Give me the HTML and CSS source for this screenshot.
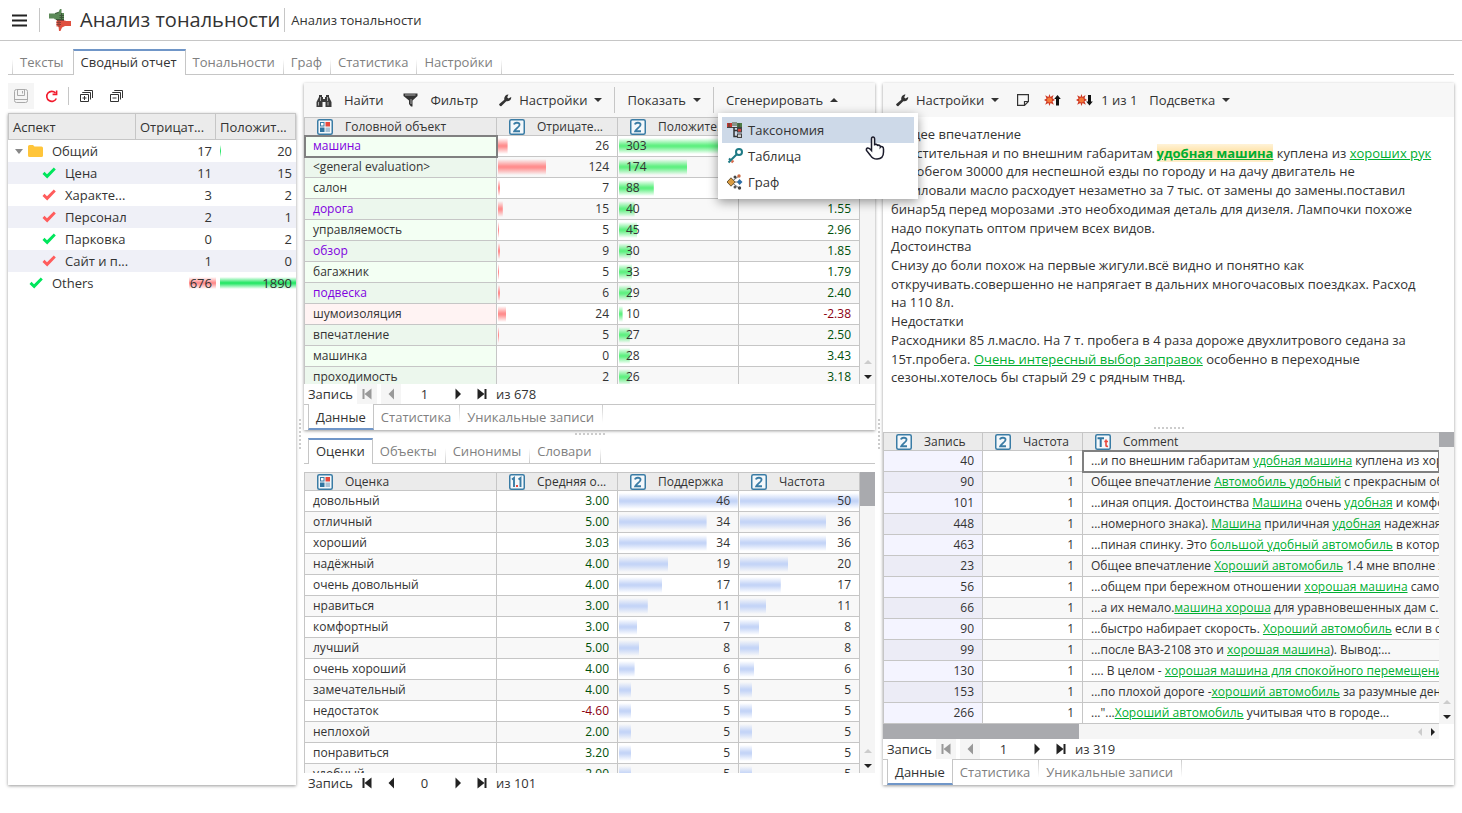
FILE: index.html
```html
<!DOCTYPE html>
<html lang="ru">
<head>
<meta charset="utf-8">
<title>Анализ тональности</title>
<link rel="stylesheet" href="styles.css">
</head>
<body>
<svg class="sprite" aria-hidden="true">
  <symbol id="i-cat" viewBox="0 0 16 16"><rect x=".75" y=".75" width="14.5" height="14.5" rx="1.5" fill="#f4f8fb" stroke="#3a7ca5" stroke-width="1.5"/><rect x="3.5" y="3.5" width="3.5" height="3.5" fill="#fff" stroke="#3a7ca5"/><rect x="8.5" y="3" width="4.5" height="4.5" fill="#e8483c"/><rect x="3" y="8.500" width="4.500" height="4.500" fill="#2f74a0"/><rect x="8.500" y="8.500" width="4.500" height="4.500" fill="#a9c3d6"/></symbol>
  <symbol id="i-num" viewBox="0 0 16 16"><rect x=".75" y=".75" width="14.5" height="14.5" rx="1.5" fill="#f4f8fb" stroke="#3a7ca5" stroke-width="1.5"/><path d="M5 5.500C5.500 3 10.800 3 10.500 6 10.300 8 6.500 9.500 5.300 12.200H11" fill="none" stroke="#3a7ca5" stroke-width="1.900"/></symbol>
  <symbol id="i-real" viewBox="0 0 16 16"><rect x=".75" y=".75" width="14.5" height="14.5" rx="1.5" fill="#f4f8fb" stroke="#3a7ca5" stroke-width="1.5"/><path d="M3 5.500 5 4V13M9.500 5.500 11.500 4V13" fill="none" stroke="#3a7ca5" stroke-width="1.900"/><rect x="7" y="11" width="2" height="2" fill="#e8483c"/></symbol>
  <symbol id="i-text" viewBox="0 0 16 16"><rect x=".75" y=".75" width="14.5" height="14.5" rx="1.5" fill="#f4f8fb" stroke="#3a7ca5" stroke-width="1.5"/><path d="M2.500 4.200H9M5.700 4V13" fill="none" stroke="#2f74a0" stroke-width="2"/><path d="M11 5.500V11.500Q11 12.700 13 12.300M9.300 7.500H13" fill="none" stroke="#e8483c" stroke-width="1.600"/></symbol>
  <symbol id="i-wrench" viewBox="0 0 14 14"><path d="M1 11.200 6.300 6.800C5.800 4 7.500 1.500 10.500 1.500L9.200 4.200 10.300 5.400 13.200 4C13.500 7 10.800 8.700 8.300 8.300L3.200 13.200Q1.800 13.600 1 11.200Z" fill="#333"/></symbol>
  <symbol id="i-first" viewBox="0 0 12 12"><path d="M2.500 1V11" stroke="currentColor" stroke-width="2"/><path d="M10.500 .5V11.500L3.500 6Z" fill="currentColor"/></symbol>
  <symbol id="i-prev" viewBox="0 0 12 12"><path d="M9 .5V11.500L3.500 6Z" fill="currentColor"/></symbol>
  <symbol id="i-next" viewBox="0 0 12 12"><path d="M3.500 .5V11.500L9 6Z" fill="currentColor"/></symbol>
  <symbol id="i-last" viewBox="0 0 12 12"><path d="M9.500 1V11" stroke="currentColor" stroke-width="2"/><path d="M1.500 .5V11.500L8.500 6Z" fill="currentColor"/></symbol>
  <symbol id="i-check" viewBox="0 0 14 12"><path d="M.5 7 2.500 4.800 5 7.300 11.800 .5 13.800 2.400 5.200 11.500Z" fill="currentColor"/></symbol>
  <symbol id="i-burst" viewBox="0 0 11 12"><path d="M5.500 0 6.500 3 9.500 1 8.500 4.200 11 6 8.500 7.200 9.800 10.800 6.600 9 5.500 12 4.400 9 1.200 10.800 2.500 7.500 0 6 2.500 4.400 1.200 1.200 4.400 3Z" fill="#cf3a24"/><circle cx="5.500" cy="6" r="2.500" fill="#f5793a"/></symbol>
</svg>

<header class="top">
  <button class="burger" aria-label="Меню"><svg width="15" height="13" viewBox="0 0 15 13"><path d="M0 1.500H15M0 6.500H15M0 11.500H15" stroke="#222" stroke-width="2.200"/></svg></button>
  <span class="vsep"></span>
  <svg class="logo" width="22" height="22" viewBox="0 0 22 22"><path d="M0 4.500H6L9.500 3 11 0H12.500V4H15V10.500H6L5 9.500H0Z" fill="#5c8a58"/><path d="M6 4.500 9.500 3.500M12.500 4V10M10.500 6.500H15M10.500 8.500H15M7 10.500H15" stroke="#3c5638"/><path d="M22 12H17L16 11.500H7.500V17.500H9.500L10 22H11.500L13 18.500 16 17H22Z" fill="#e0503f"/><path d="M7.500 13.500H12M7.500 15.500H12M10 12V18M8 11.500H15" stroke="#8a4038"/></svg>
  <h1>Анализ тональности</h1>
  <span class="vsep"></span>
  <span class="crumb">Анализ тональности</span>
</header>

<nav class="tabs tabs-top main-tabs">
  <button>Тексты</button><button class="on">Сводный отчет</button><button>Тональности</button><button>Граф</button><button>Статистика</button><button>Настройки</button>
</nav>

<main>
  <section class="aspects">
    <div class="icons">
      <button class="off" aria-label="Сохранить"><svg width="14" height="14" viewBox="0 0 14 14" fill="none" stroke="#aaa"><rect x=".5" y=".5" width="13" height="13" rx="2"/><path d="M3.500.5V6.500H10.500V.5M8.500 2V4.500M1 10.500H13"/></svg></button>
      <button aria-label="Обновить"><svg width="13" height="13" viewBox="0 0 13 13" fill="none" stroke="#f21a2c" stroke-width="1.600"><path d="M10.500 3A5 5 0 1 0 11.300 8.500"/><path d="M11.600.5V4.400H7.600"/></svg></button>
      <span class="vsep"></span>
      <button aria-label="Развернуть все"><svg width="13" height="12" viewBox="0 0 13 12" fill="none" stroke="#333"><path d="M2.500 3V2.500H10.500V9.500M4.500 1V.5H12.500V8M.5 4.500H8.500V11.500H.5ZM2.500 8H6.500M4.500 6V10"/></svg></button>
      <button aria-label="Свернуть все"><svg width="13" height="12" viewBox="0 0 13 12" fill="none" stroke="#333"><path d="M2.500 3V2.500H10.500V9.500M4.500 1V.5H12.500V8M.5 4.500H8.500V11.500H.5ZM2.500 8H6.500"/></svg></button>
    </div>
    <div class="panel tree-panel">
    <table class="tree">
      <colgroup><col><col class="w80"><col class="w80"></colgroup>
      <thead><tr><th>Аспект</th><th>Отрицат...</th><th>Положит...</th></tr></thead>
      <tbody>
        <tr><td><div class="node"><svg width="8" height="5" viewBox="0 0 8 5"><path d="M0 0H8L4 5Z" fill="#888"/></svg><svg class="folder" width="15" height="12" viewBox="0 0 15 12"><path d="M0 1.500Q0 0 1.500 0H5L6.500 1.500H13.500Q15 1.500 15 3V10.500Q15 12 13.500 12H1.500Q0 12 0 10.500Z" fill="#ffc53a"/></svg>Общий</div></td><td>17</td><td class="pos" style="--bar:1px">20</td></tr>
        <tr><td><div class="node leaf"><svg class="ok" width="14" height="12"><use href="#i-check"/></svg>Цена</div></td><td>11</td><td>15</td></tr>
        <tr><td><div class="node leaf"><svg class="bad" width="14" height="12"><use href="#i-check"/></svg>Характе...</div></td><td>3</td><td>2</td></tr>
        <tr><td><div class="node leaf"><svg class="bad" width="14" height="12"><use href="#i-check"/></svg>Персонал</div></td><td>2</td><td>1</td></tr>
        <tr><td><div class="node leaf"><svg class="ok" width="14" height="12"><use href="#i-check"/></svg>Парковка</div></td><td>0</td><td>2</td></tr>
        <tr><td><div class="node leaf"><svg class="bad" width="14" height="12"><use href="#i-check"/></svg>Сайт и п...</div></td><td>1</td><td>0</td></tr>
        <tr><td><div class="node root"><svg class="ok" width="14" height="12"><use href="#i-check"/></svg>Others</div></td><td class="neg" style="--bar:34%">676</td><td class="pos" style="--bar:100%">1890</td></tr>
      </tbody>
    </table>
    </div>
  </section>

  <div class="split-v"></div>

  <div class="middle">
    <section class="panel">
      <div class="toolbar">
        <button class="wide"><svg width="16" height="15" viewBox="0 0 16 15"><path d="M3 2H6V4H7V6H9V4H10V2H13V4L15.500 9V14H9.500V9H6.500V14H.5V9L3 4Z" fill="#3a3a3a"/><path d="M2.500 9V12.500M4.500 4V8M11.500 4V8M12 9V12.500" stroke="#aaa"/></svg>Найти</button>
        <button class="wide"><svg width="15" height="14" viewBox="0 0 15 14"><path d="M.5.500H14.500V3L9.500 7.500V13.500H8L6 11V7.500L.5 3Z" fill="#333"/><path d="M2 2H12.500M8 6V11" stroke="#aaa"/></svg>Фильтр</button>
        <button><svg width="14" height="14"><use href="#i-wrench"/></svg>Настройки<i class="caret"></i></button>
        <span class="vsep"></span>
        <button>Показать<i class="caret"></i></button>
        <span class="vsep"></span>
        <div class="drop">
          <button>Сгенерировать<i class="caret up"></i></button>
          <div class="menu">
            <button class="hot"><svg width="16" height="16" viewBox="0 0 16 16"><path d="M0 1H5V5H0Z" fill="#c9352c"/><path d="M5 0H10V4H5Z" fill="#8b938b"/><path d="M10 1H15V5H10Z" fill="#4b7a45"/><path d="M0 5.500H15M2 1V5M12 1V5" stroke="#444"/><path d="M7 5V14.500H11M7 8.500H11" fill="none" stroke="#333" stroke-width="1.500"/><rect x="10.500" y="6.500" width="4" height="3.500" fill="#d8403a" stroke="#444"/><rect x="10.500" y="12" width="4" height="3.500" fill="#ccc" stroke="#444"/></svg>Таксономия</button>
            <button><svg width="16" height="16" viewBox="0 0 16 16" fill="none" stroke="#1f7a85" stroke-width="2"><circle cx="12" cy="4" r="3"/><path d="M9.800 6.200 1.500 14.500M3.500 12 2 10.500"/><path d="M4.500 14.500 6.500 12.500" stroke="#d4694c"/></svg>Таблица</button>
            <button><svg width="16" height="16" viewBox="0 0 16 16"><path d="M4 8 12 2M4 8H13M4 8 12 14" stroke="#777"/><path d="M4 3.800 8.200 8 4 12.200 0 8Z" fill="#d99b41" stroke="#6b5632"/><circle cx="8" cy="3" r="1.500" fill="#444"/><circle cx="12" cy="2" r="1.700" fill="#c96a42"/><path d="M12.500 5 15.500 8 12.500 11 10 8Z" fill="#2c6ea6"/><circle cx="8" cy="13" r="1.500" fill="#555"/><circle cx="12.500" cy="14" r="1.700" fill="#444"/></svg>Граф</button>
            <svg class="hand" width="20" height="24" viewBox="0 0 20 24"><path d="M6.500 14.500V3Q6.500 1 8 1T9.600 3V9.500Q9.800 8 11.200 8.200 12.600 8.500 12.500 10 13 8.800 14.300 9.200 15.500 9.700 15.400 11 16 10.200 17.300 10.700 18.500 11.200 18.500 13V16Q18.500 23 12 23 7.500 23 5.500 19.500L1.500 14.500Q1 12.500 2.500 12T6.500 14.500Z" fill="#fff" stroke="#1b1b2b" stroke-width="1.500"/></svg>
          </div>
        </div>
      </div>
      <div class="grid">
        <div class="clip">
          <table class="data objects">
            <colgroup><col><col class="w121"><col class="w121"><col class="w121"></colgroup>
            <thead><tr><th><div><svg width="16" height="16"><use href="#i-cat"/></svg>Головной объект</div></th><th><div><svg width="16" height="16"><use href="#i-num"/></svg>Отрицате...</div></th><th><div><svg width="16" height="16"><use href="#i-num"/></svg>Положите...</div></th><th><div><svg width="16" height="16"><use href="#i-real"/></svg>Средняя о...</div></th></tr></thead>
            <tbody>
              <tr><td class="vis focus">машина</td><td class="neg" style="--bar:8%">26</td><td class="pos" style="--bar:99%">303</td><td class="up">2.62</td></tr>
              <tr><td>&lt;general evaluation&gt;</td><td class="neg" style="--bar:40%">124</td><td class="pos" style="--bar:57%">174</td><td class="up">1.20</td></tr>
              <tr><td>салон</td><td class="neg" style="--bar:2%">7</td><td class="pos" style="--bar:29%">88</td><td class="up">2.94</td></tr>
              <tr><td class="vis">дорога</td><td class="neg" style="--bar:4%">15</td><td class="pos" style="--bar:13%">40</td><td class="up">1.55</td></tr>
              <tr><td>управляемость</td><td class="neg" style="--bar:1%">5</td><td class="pos" style="--bar:15%">45</td><td class="up">2.96</td></tr>
              <tr><td class="vis">обзор</td><td class="neg" style="--bar:2%">9</td><td class="pos" style="--bar:10%">30</td><td class="up">1.85</td></tr>
              <tr><td>багажник</td><td class="neg" style="--bar:1%">5</td><td class="pos" style="--bar:11%">33</td><td class="up">1.79</td></tr>
              <tr><td class="vis">подвеска</td><td class="neg" style="--bar:2%">6</td><td class="pos" style="--bar:10%">29</td><td class="up">2.40</td></tr>
              <tr class="minus"><td>шумоизоляция</td><td class="neg" style="--bar:7%">24</td><td class="pos" style="--bar:3%">10</td><td class="down">-2.38</td></tr>
              <tr><td>впечатление</td><td class="neg" style="--bar:1%">5</td><td class="pos" style="--bar:9%">27</td><td class="up">2.50</td></tr>
              <tr><td>машинка</td><td>0</td><td class="pos" style="--bar:9%">28</td><td class="up">3.43</td></tr>
              <tr><td>проходимость</td><td>2</td><td class="pos" style="--bar:9%">26</td><td class="up">3.18</td></tr>
            </tbody>
          </table>
        </div>
        <div class="vscroll"><i class="arr-up"></i><i class="arr-down"></i></div>
      </div>
      <div class="pager"><label for="p1">Запись</label><button disabled aria-label="Первая"><svg width="12" height="12"><use href="#i-first"/></svg></button><button disabled aria-label="Назад"><svg width="12" height="12"><use href="#i-prev"/></svg></button><input id="p1" value="1"><button aria-label="Вперёд"><svg width="12" height="12"><use href="#i-next"/></svg></button><button aria-label="Последняя"><svg width="12" height="12"><use href="#i-last"/></svg></button><span>из 678</span></div>
      <nav class="tabs tabs-bottom"><button class="on">Данные</button><button>Статистика</button><button>Уникальные записи</button></nav>
    </section>

    <div class="split-h"></div>

    <section class="lower">
      <nav class="tabs tabs-top"><button class="on">Оценки</button><button>Объекты</button><button>Синонимы</button><button>Словари</button></nav>
      <div class="grid">
        <div class="clip">
          <table class="data">
            <colgroup><col><col class="w121"><col class="w121"><col class="w121"></colgroup>
            <thead><tr><th><div><svg width="16" height="16"><use href="#i-cat"/></svg>Оценка</div></th><th><div><svg width="16" height="16"><use href="#i-real"/></svg>Средняя о...</div></th><th><div><svg width="16" height="16"><use href="#i-num"/></svg>Поддержка</div></th><th><div><svg width="16" height="16"><use href="#i-num"/></svg>Частота</div></th></tr></thead>
            <tbody>
              <tr><td>довольный</td><td class="up">3.00</td><td class="cnt" style="--bar:99%">46</td><td class="cnt" style="--bar:99%">50</td></tr>
              <tr><td>отличный</td><td class="up">5.00</td><td class="cnt" style="--bar:73%">34</td><td class="cnt" style="--bar:72%">36</td></tr>
              <tr><td>хороший</td><td class="up">3.03</td><td class="cnt" style="--bar:73%">34</td><td class="cnt" style="--bar:72%">36</td></tr>
              <tr><td>надёжный</td><td class="up">4.00</td><td class="cnt" style="--bar:41%">19</td><td class="cnt" style="--bar:40%">20</td></tr>
              <tr><td>очень довольный</td><td class="up">4.00</td><td class="cnt" style="--bar:36%">17</td><td class="cnt" style="--bar:34%">17</td></tr>
              <tr><td>нравиться</td><td class="up">3.00</td><td class="cnt" style="--bar:24%">11</td><td class="cnt" style="--bar:22%">11</td></tr>
              <tr><td>комфортный</td><td class="up">3.00</td><td class="cnt" style="--bar:15%">7</td><td class="cnt" style="--bar:16%">8</td></tr>
              <tr><td>лучший</td><td class="up">5.00</td><td class="cnt" style="--bar:17%">8</td><td class="cnt" style="--bar:16%">8</td></tr>
              <tr><td>очень хороший</td><td class="up">4.00</td><td class="cnt" style="--bar:13%">6</td><td class="cnt" style="--bar:12%">6</td></tr>
              <tr><td>замечательный</td><td class="up">4.00</td><td class="cnt" style="--bar:10%">5</td><td class="cnt" style="--bar:10%">5</td></tr>
              <tr><td>недостаток</td><td class="down">-4.60</td><td class="cnt" style="--bar:10%">5</td><td class="cnt" style="--bar:10%">5</td></tr>
              <tr><td>неплохой</td><td class="up">2.00</td><td class="cnt" style="--bar:10%">5</td><td class="cnt" style="--bar:10%">5</td></tr>
              <tr><td>понравиться</td><td class="up">3.20</td><td class="cnt" style="--bar:10%">5</td><td class="cnt" style="--bar:10%">5</td></tr>
              <tr><td>удобный</td><td class="up">2.00</td><td class="cnt" style="--bar:10%">5</td><td class="cnt" style="--bar:10%">5</td></tr>
            </tbody>
          </table>
        </div>
        <div class="vscroll"><i class="thumb tall"></i><i class="arr-up"></i><i class="arr-down"></i></div>
      </div>
      <div class="pager"><label for="p2">Запись</label><button aria-label="Первая"><svg width="12" height="12"><use href="#i-first"/></svg></button><button aria-label="Назад"><svg width="12" height="12"><use href="#i-prev"/></svg></button><input id="p2" value="0"><button aria-label="Вперёд"><svg width="12" height="12"><use href="#i-next"/></svg></button><button aria-label="Последняя"><svg width="12" height="12"><use href="#i-last"/></svg></button><span>из 101</span></div>
    </section>
  </div>

  <div class="split-v"></div>

  <section class="panel reader">
    <div class="toolbar">
      <button><svg width="14" height="14"><use href="#i-wrench"/></svg>Настройки<i class="caret"></i></button>
      <button class="ico" aria-label="Заметка"><svg width="12" height="12" viewBox="0 0 12 12" fill="none" stroke="#333" stroke-width="1.200"><path d="M.6.600H11.400V7.500L7.500 11.400H.6ZM7.500 11V7.500H11"/></svg></button>
      <button class="ico" aria-label="Предыдущее"><svg width="17" height="12" viewBox="0 0 17 12"><use href="#i-burst" width="11" height="12"/><path d="M13.500 1 16.800 5H15V11.500H12V5H10.200Z" fill="#111"/></svg></button>
      <button class="ico" aria-label="Следующее"><svg width="17" height="12" viewBox="0 0 17 12"><use href="#i-burst" width="11" height="12"/><path d="M13.500 11.500 16.800 7.500H15V1H12V7.500H10.200Z" fill="#111"/></svg></button>
      <span class="count">1 из 1</span>
      <button class="hl">Подсветка<i class="caret"></i></button>
    </div>
    <article>
      Общее впечатление<br>
      Вместительная и по внешним габаритам <a href="#" class="cur">удобная машина</a> куплена из <a href="#">хороших рук</a><br>
      с пробегом 30000 для неспешной езды по городу и на дачу двигатель не<br>
      насиловали масло расходует незаметно за 7 тыс. от замены до замены.поставил<br>
      бинар5д перед морозами .это необходимая деталь для дизеля. Лампочки похоже<br>
      надо покупать оптом причем всех видов.<br>
      Достоинства<br>
      Снизу до боли похож на первые жигули.всё видно и понятно как<br>
      откручивать.совершенно не напрягает в дальних многочасовых поездках. Расход<br>
      на 110 8л.<br>
      Недостатки<br>
      Расходники 85 л.масло. На 7 т. пробега в 4 раза дороже двухлитрового седана за<br>
      15т.пробега. <a href="#">Очень интересный выбор заправок</a> особенно в переходные<br>
      сезоны.хотелось бы старый 29 с рядным тнвд.
    </article>
    <div class="split-h"></div>
    <div class="records">
      <div class="grid">
        <div class="clip">
          <table class="data quotes">
            <colgroup><col class="w99"><col class="w100"><col></colgroup>
            <thead><tr><th><div><svg width="16" height="16"><use href="#i-num"/></svg>Запись</div></th><th><div><svg width="16" height="16"><use href="#i-num"/></svg>Частота</div></th><th><div><svg width="16" height="16"><use href="#i-text"/></svg>Comment</div></th></tr></thead>
            <tbody>
              <tr><td>40</td><td>1</td><td class="focus">...и по внешним габаритам <a href="#">удобная машина</a> куплена из хороших рук</td></tr>
              <tr><td>90</td><td>1</td><td>Общее впечатление <a href="#">Автомобиль удобный</a> с прекрасным обзором</td></tr>
              <tr><td>101</td><td>1</td><td>...иная опция. Достоинства <a href="#">Машина</a> очень <a href="#">удобная</a> и комфортная</td></tr>
              <tr><td>448</td><td>1</td><td>...номерного знака). <a href="#">Машина</a> приличная <a href="#">удобная</a> надежная</td></tr>
              <tr><td>463</td><td>1</td><td>...пиная спинку. Это <a href="#">большой удобный автомобиль</a> в котором</td></tr>
              <tr><td>23</td><td>1</td><td>Общее впечатление <a href="#">Хороший автомобиль</a> 1.4 мне вполне хватает</td></tr>
              <tr><td>56</td><td>1</td><td>...общем при бережном отношении <a href="#">хорошая машина</a> само собой</td></tr>
              <tr><td>66</td><td>1</td><td>...а их немало.<a href="#">машина хороша</a> для уравновешенных дам с...</td></tr>
              <tr><td>90</td><td>1</td><td>...быстро набирает скорость. <a href="#">Хороший автомобиль</a> если в семье</td></tr>
              <tr><td>99</td><td>1</td><td>...после ВАЗ-2108 это и <a href="#">хорошая машина</a>). Вывод:...</td></tr>
              <tr><td>130</td><td>1</td><td>.... В целом - <a href="#">хорошая машина для спокойного перемещения</a></td></tr>
              <tr><td>153</td><td>1</td><td>...по плохой дороге -<a href="#">хороший автомобиль</a> за разумные деньги</td></tr>
              <tr><td>266</td><td>1</td><td>..."...<a href="#">Хороший автомобиль</a> учитывая что в городе...</td></tr>
            </tbody>
          </table>
        </div>
        <div class="vscroll"><i class="thumb"></i><i class="arr-up"></i><i class="arr-down"></i></div>
      </div>
      <div class="hscroll"><i class="thumb"></i><i class="arr-left"></i><i class="arr-right"></i></div>
      <div class="pager"><label for="p3">Запись</label><button disabled aria-label="Первая"><svg width="12" height="12"><use href="#i-first"/></svg></button><button disabled aria-label="Назад"><svg width="12" height="12"><use href="#i-prev"/></svg></button><input id="p3" value="1"><button aria-label="Вперёд"><svg width="12" height="12"><use href="#i-next"/></svg></button><button aria-label="Последняя"><svg width="12" height="12"><use href="#i-last"/></svg></button><span>из 319</span></div>
      <nav class="tabs tabs-bottom"><button class="on">Данные</button><button>Статистика</button><button>Уникальные записи</button></nav>
    </div>
  </section>
</main>
</body>
</html>
```
FILE: styles.css
```css
* { box-sizing: border-box; }

:root {
  --line: #c6c6c6;
  --bar-h: #f7f7f7;
  --blue: #7096c8;
}

body {
  margin: 0;
  height: 100vh;
  display: flex;
  flex-direction: column;
  overflow: hidden;
  background: #fff;
  color: #333;
  font: 13px/18px "Open Sans", "Noto Sans", sans-serif;
}

button, input {
  font: inherit;
  color: inherit;
  background: none;
  border: 0;
  padding: 0;
  margin: 0;
}

svg { display: block; flex: none; }
.sprite { position: absolute; width: 0; height: 0; }
a { color: #00ae31; }

.vsep { width: 1px; height: 26px; background: var(--line); flex: none; }

/* page header */
.top {
  display: flex;
  align-items: center;
  height: 41px;
  flex: none;
  border-bottom: 1px solid var(--line);
  padding-left: 12px;
}
.top .vsep { height: 24px; }
.burger { margin-right: 12px; }
.logo { margin: 0 9px; }
.top h1 { font-size: 20px; font-weight: 400; line-height: 28px; margin: 0 4px 0 0; }
.crumb { margin-left: 6px; }

/* tab strips */
.tabs { display: flex; flex: none; white-space: nowrap; }
.tabs button { padding: 0 8px 0 7px; color: #808080; border-right: 1px solid; }
.tabs button.on { color: #333; background: #fff; border-left: 1px solid var(--line); border-right-color: var(--line); }
.tabs-top { height: 26px; padding-left: 4px; box-shadow: inset 0 -1px var(--line); }
.tabs-top button { border-image: linear-gradient(transparent 40%, var(--line)) 1; border-width: 0 1px 0 0; }
.tabs-top button.on { border-image: none; border-top: 2px solid var(--blue); padding: 0 7px 2px; }
.tabs-bottom { height: 26px; padding-left: 4px; box-shadow: inset 0 1px var(--line); }
.tabs-bottom button { border-image: linear-gradient(var(--line), transparent 70%) 1; border-width: 0 1px 0 0; }
.tabs-bottom button.on { border-image: none; border-bottom: 2px solid var(--blue); padding: 2px 7px 0; }
.main-tabs { margin: 8px 8px 0; }
.main-tabs button:first-child { border-style: solid; border-width: 0 0 0 1px; padding-right: 9px; }
.main-tabs button.on { padding-right: 8px; }

main {
  flex: 1;
  min-height: 0;
  display: grid;
  grid-template-columns: 288px 8px minmax(0, 1fr) 8px minmax(0, 1fr);
  grid-template-rows: minmax(0, 1fr);
  padding: 8px 8px 20px;
}

.split-v, .split-h { display: flex; align-items: center; justify-content: center; }
.split-v { margin-bottom: 8px; }
.split-v::before, .split-h::before { content: ""; width: 2px; height: 30px; background: repeating-linear-gradient(#ccc 0 2px, transparent 2px 4px); }
.split-h::before { width: 30px; height: 2px; background: repeating-linear-gradient(90deg, #ccc 0 2px, transparent 2px 4px); }

.panel { background: #fff; box-shadow: 0 1px 3px rgba(0, 0, 0, .4); }

/* aspect tree */
.aspects { margin-bottom: 8px; min-width: 0; display: flex; flex-direction: column; }
.tree-panel { flex: 1; }
.icons { display: flex; align-items: center; height: 30px; flex: none; padding-bottom: 4px; }
.icons button { width: 26px; height: 26px; margin-right: 4px; display: grid; place-items: center; }
.icons .vsep { height: 18px; margin-right: 4px; }
.icons .off { background: #f5f5f5; }
.tree, .data { border-collapse: separate; border-spacing: 0; table-layout: fixed; width: 100%; }
.tree .w80 { width: 80px; }
.tree th { height: 27px; padding: 0 4px; border: 1px solid var(--line); border-left-width: 0; background: #ebebeb; font-weight: 400; text-align: left; }
.tree th:first-child { border-left-width: 1px; }
.tree td { height: 22px; padding: 0 4px; text-align: right; }
.tree tr:nth-child(even) td { background: #eff0f7; }
.node { display: flex; align-items: center; gap: 5px; padding-left: 3px; }
.node .folder { margin-right: 4px; }
.node.leaf { padding-left: 30px; gap: 9px; }
.node.root { padding-left: 17px; gap: 9px; }
.ok { color: #00e65c; }
.bad { color: #ff5c5c; }

/* in-cell bars */
.neg, .pos, .cnt { background-repeat: no-repeat; background-position: 1px 50%; background-size: var(--bar) 16px; }
.data .neg, .tree .neg { background-image: linear-gradient(transparent, #ff8f8f 45%, #ff8f8f 55%, transparent); }
.data .pos { background-image: linear-gradient(transparent, #62f083 45%, #62f083 55%, transparent); }
.data .cnt { background-image: linear-gradient(transparent, #c5d5f7 45%, #c5d5f7 55%, transparent); }
.tree .pos, .tree .neg { background-size: var(--bar) 12px; }
.tree .pos { background-image: linear-gradient(transparent, #2ee86c 45%, #2ee86c 55%, transparent); background-position: 4px 50%; }
.tree .neg { background-position: 100% 50%; }
.data .pos { text-align: left; }

/* toolbars */
.toolbar { display: flex; align-items: center; height: 34px; flex: none; background: var(--bar-h); padding-left: 2px; white-space: nowrap; }
.toolbar button { display: flex; align-items: center; gap: 7px; height: 26px; padding: 0 10px; }
.toolbar .wide { gap: 12px; }
.toolbar .vsep { margin: 0 2px; }
.toolbar .ico { padding: 0 7px 0 8px; }
.count { padding: 0 2px 0 1px; }
.caret { border: 4px solid transparent; border-top-color: #333; border-bottom: 0; }
.caret.up { border: 4px solid transparent; border-bottom-color: #333; border-top: 0; }

.drop { position: relative; }
.menu {
  position: absolute;
  z-index: 5;
  top: 26px;
  left: 2px;
  width: 200px;
  padding: 4px;
  background: #fff;
  box-shadow: 0 3px 10px rgba(0, 0, 0, .4);
}
.toolbar .menu button { width: 100%; padding: 0 5px; gap: 5px; }
.toolbar .menu .hot { background: #cdd9e8; }
.hand { position: absolute; left: 147px; top: 23px; }

/* middle column */
.middle { display: grid; grid-template-rows: minmax(0, 347fr) 8px minmax(0, 355fr); min-width: 0; }
.panel, .lower, .records { display: flex; flex-direction: column; min-width: 0; min-height: 0; }
.lower .tabs { margin-bottom: 8px; }

.grid { flex: 1; min-height: 0; display: grid; grid-template-columns: minmax(0, 1fr) 15px; grid-template-rows: minmax(0, 1fr); }
.clip { overflow: hidden; min-height: 0; }
.data { border-top: 1px solid var(--line); border-left: 1px solid var(--line); font-size: 12px; line-height: 18px; }
.data th, .data td { border-right: 1px solid var(--line); border-bottom: 1px solid var(--line); white-space: nowrap; overflow: hidden; }
.data th { height: 18px; padding: 0 0 0 12px; background-color: #ebebeb; font-weight: 400; }
.data th div { display: flex; align-items: center; gap: 12px; height: 17px; }
.data td { height: 21px; padding: 0 8px; text-align: right; }
.data td:first-child { text-align: left; }
.data tr:nth-child(even) td { background-color: #f8f8f8; }
.data td.pos { text-align: left; }
.w121 { width: 121px; }
.w99 { width: 99px; }
.w100 { width: 100px; }
.objects td:first-child { background-color: #f3fff3; }
.data.objects tr:nth-child(even) td:first-child { background-color: #ecf7ed; }
.objects .minus td:first-child { background-color: #fff3f3; }
.data .vis { color: #8000e0; }
.up { color: #00500a; }
.down { color: #8b0010; }
.focus { outline: 2px solid #808080; outline-offset: -1px; }

.vscroll, .hscroll { display: flex; background: #f5f5f5; }
.vscroll { flex-direction: column; align-items: center; padding-bottom: 5px; }
.vscroll i, .hscroll i { border: 4px solid transparent; }
.vscroll .arr-up { margin-top: auto; margin-bottom: 11px; border-top: 0; border-bottom-color: #ccc; }
.vscroll .arr-down { border-bottom: 0; border-top-color: #222; }
.vscroll .thumb, .hscroll .thumb { border: 0; background: #a9aaae; width: 100%; height: 15px; }
.vscroll .thumb.tall { height: 34px; }
.hscroll { height: 15px; flex: none; align-items: center; margin-right: 15px; padding-right: 4px; }
.hscroll .thumb { width: 196px; }
.hscroll .arr-left { margin-left: auto; margin-right: 9px; border-left: 0; border-right-color: #ccc; }
.hscroll .arr-right { border-right: 0; border-left-color: #222; }

.pager { display: flex; align-items: center; height: 20px; flex: none; padding-left: 4px; }
.pager label { width: 49px; }
.pager button { width: 20px; height: 20px; margin-right: 4px; display: grid; place-items: center; color: #222; }
.pager button:disabled { background: #f5f5f5; color: #999; }
.pager input { width: 39px; margin-right: 4px; text-align: center; }

/* text viewer */
.panel.reader { display: grid; grid-template-columns: minmax(0, 1fr); grid-template-rows: 34px minmax(0, 307fr) 8px minmax(0, 353fr); margin-bottom: 8px; }
article { padding: 8px; overflow: hidden; line-height: 1.44; white-space: nowrap; }
.cur { font-weight: 700; background: linear-gradient(#fff3d8, #ffe0a0 50%, #ffefcc); }
.quotes td:first-child { text-align: right; background-color: #f4f4ff; }
.data.quotes tr:nth-child(even) td:first-child { background-color: #ececf6; }
.quotes td:last-child { text-align: left; }
.quotes th:last-child, .quotes td:last-child { border-right: 0; }
```
